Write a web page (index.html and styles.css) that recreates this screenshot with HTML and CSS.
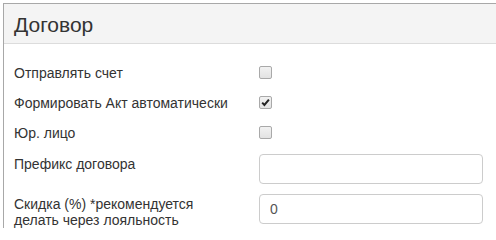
FILE: index.html
```html
<!DOCTYPE html>
<html lang="ru">
<head>
<meta charset="utf-8">
<link rel="stylesheet" href="styles.css">
</head>
<body>
<div class="panel">
  <div class="panel-heading">Договор</div>
  <div class="panel-body">
    <div class="row row-check">
      <div class="label">Отправлять счет</div>
      <div class="control"><span class="cb"></span></div>
    </div>
    <div class="row row-check">
      <div class="label">Формировать Акт автоматически</div>
      <div class="control"><span class="cb checked"><svg viewBox="0 0 13 13" width="13" height="13"><path d="M3.2 6.6 L5.4 8.9 L9.9 3.6" fill="none" stroke="#222" stroke-width="2"/></svg></span></div>
    </div>
    <div class="row row-check">
      <div class="label">Юр. лицо</div>
      <div class="control"><span class="cb"></span></div>
    </div>
    <div class="row row-input first">
      <div class="label">Префикс договора</div>
      <div class="control"><input class="input" type="text" value=""></div>
    </div>
    <div class="row row-input">
      <div class="label">Скидка (%) *рекомендуется<br>делать через лояльность</div>
      <div class="control"><input class="input" type="text" value="0"></div>
    </div>
  </div>
</div>
</body>
</html>
```
FILE: styles.css
```css
html, body {
  margin: 0;
  padding: 0;
  overflow: hidden;
  background: #fff;
}
body {
  font-family: "Liberation Sans", Arial, sans-serif;
  color: #333;
  font-size: 14px;
}
.panel {
  margin: 3px 0 0 3px;
  border-top: 1px solid #a8a8a8;
  border-left: 1px solid #a8a8a8;
}
.panel-heading {
  background: #f4f4f4;
  border-bottom: 1px solid #dcdcdc;
  height: 40px;
  box-sizing: border-box;
  padding: 9px 0 0 10px;
  font-size: 21px;
  line-height: 24px;
}
.panel-body {
  padding: 13px 0 0 10px;
}
.row {
  display: flex;
}
.label {
  width: 245px;
  flex: none;
  line-height: 16px;
}
.row-check {
  height: 30px;
  align-items: center;
}
.row-check .label {
  padding-top: 1px;
}
.row-check .control {
  display: flex;
  align-items: center;
}
.cb {
  display: block;
  width: 11px;
  height: 11px;
  border: 1px solid #a9a9a9;
  border-radius: 2px;
  background: linear-gradient(#f2f2f2, #e2e2e2);
  position: relative;
}
.cb svg {
  position: absolute;
  left: -1px;
  top: -1px;
}
.row-input {
  margin-top: 10px;
}
.row-input.first {
  margin-top: 7px;
}
.row-input .label {
  padding-top: 2px;
}
.input {
  display: block;
  box-sizing: border-box;
  width: 224px;
  height: 30px;
  border: 1px solid #cccccc;
  border-radius: 4px;
  padding: 0 10px;
  font-family: "Liberation Sans", Arial, sans-serif;
  font-size: 14px;
  color: #555;
  background: #fff;
  margin: 0;
  outline: none;
}
```
